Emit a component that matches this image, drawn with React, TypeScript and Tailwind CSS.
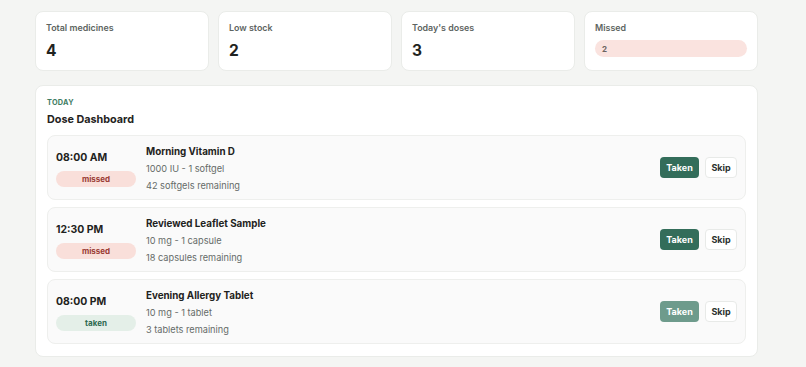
import React from "react";

type Dose = {
  time: string;
  status: "missed" | "taken";
  name: string;
  dose: string;
  remaining: string;
};

const doses: Dose[] = [
  { time: "08:00 AM", status: "missed", name: "Morning Vitamin D", dose: "1000 IU - 1 softgel", remaining: "42 softgels remaining" },
  { time: "12:30 PM", status: "missed", name: "Reviewed Leaflet Sample", dose: "10 mg - 1 capsule", remaining: "18 capsules remaining" },
  { time: "08:00 PM", status: "taken", name: "Evening Allergy Tablet", dose: "10 mg - 1 tablet", remaining: "3 tablets remaining" },
];

function Stat({ label, value, pill }: { label: string; value: string; pill?: boolean }) {
  return (
    <div className="h-[60px] rounded-[8px] border border-[#eaece9] bg-white px-[10px] pt-[9px]">
      <div className="text-[8.9px] font-semibold leading-[14px] text-[#5d6461]">{label}</div>
      {pill ? (
        <div className="mt-[5px] flex h-[17px] items-center rounded-full bg-[#fae3df] px-[7px] text-[8px] font-bold text-[#6b6461]">
          {value}
        </div>
      ) : (
        <div className="mt-[4px] text-[15.5px] font-bold leading-[24px] text-[#1f2321]">{value}</div>
      )}
    </div>
  );
}

export default function App() {
  return (
    <div
      className="min-h-[367px] w-[806px] bg-[#f4f5f3] pl-[35px] pt-[11px]"
      style={{ fontFamily: "Inter, 'Noto Sans', sans-serif" }}
    >
      <div className="w-[723px]">
        <div className="grid grid-cols-4 gap-[9px]">
          <Stat label="Total medicines" value="4" />
          <Stat label="Low stock" value="2" />
          <Stat label="Today's doses" value="3" />
          <Stat label="Missed" value="2" pill />
        </div>
        <div className="mt-[14px] rounded-[8px] border border-[#eaece9] bg-white px-[11px] pb-[12px] pt-[11px]">
          <div className="text-[7.3px] font-bold uppercase leading-[12px] tracking-[0.04em] text-[#3f7d63]">Today</div>
          <div className="mt-[2px] text-[10.8px] font-bold leading-[18px] text-[#1f2321]">Dose Dashboard</div>
          <div className="mt-[6px] flex flex-col gap-[7px]">
            {doses.map((d, i) => (
              <div
                key={i}
                className="flex h-[65px] items-center rounded-[8px] border border-[#eeefed] bg-[#fafafa] pl-[8px] pr-[8px]"
              >
                <div className="flex w-[80px] flex-col">
                  <div className="text-[10.4px] font-bold leading-[18px] text-[#1f2321]">{d.time}</div>
                  <div
                    className={
                      d.status === "missed"
                        ? "mt-[4px] flex h-[16px] items-center justify-center rounded-full bg-[#f9dfda] text-[8px] font-bold text-[#9a3b34]"
                        : "mt-[4px] flex h-[16px] items-center justify-center rounded-full bg-[#e4efe8] text-[8px] font-bold text-[#2e6a50]"
                    }
                  >
                    {d.status}
                  </div>
                </div>
                <div className="ml-[10px] flex flex-1 flex-col pt-[1px]">
                  <div className="text-[9.8px] font-bold leading-[17px] text-[#1f2321]">{d.name}</div>
                  <div className="text-[9.2px] leading-[17px] text-[#656b68]">{d.dose}</div>
                  <div className="text-[9.2px] leading-[17px] text-[#656b68]">{d.remaining}</div>
                </div>
                <div className="flex items-center gap-[6px]">
                  <button
                    className={
                      d.status === "taken"
                        ? "flex h-[21px] w-[39px] items-center justify-center rounded-[4px] bg-[#6e9b8c] text-[9px] font-bold text-white"
                        : "flex h-[21px] w-[39px] items-center justify-center rounded-[4px] bg-[#336d5a] text-[9px] font-bold text-white"
                    }
                  >
                    Taken
                  </button>
                  <button className="flex h-[21px] w-[32px] items-center justify-center rounded-[4px] border border-[#e8eae8] bg-white text-[9px] font-bold text-[#2b302e]">
                    Skip
                  </button>
                </div>
              </div>
            ))}
          </div>
        </div>
      </div>
    </div>
  );
}
